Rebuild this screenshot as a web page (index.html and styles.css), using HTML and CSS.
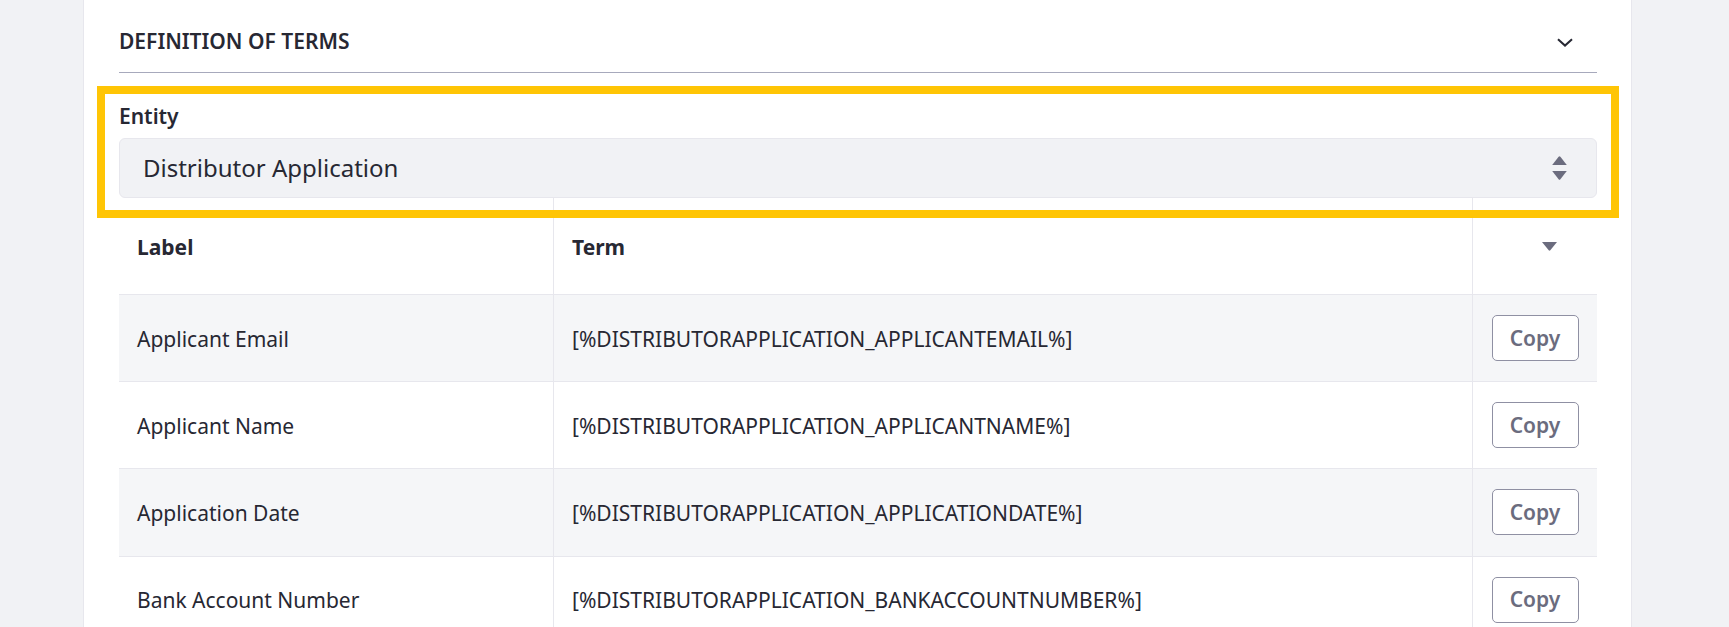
FILE: index.html
```html
<!DOCTYPE html>
<html lang="en">
<head>
<meta charset="utf-8">
<title>Definition of Terms</title>
<link rel="stylesheet" href="styles.css">
</head>
<body>
<div class="page">
  <section class="panel">
    <header class="panel-header">
      <h2 class="panel-title">DEFINITION OF TERMS</h2>
      <svg class="chevron" width="16" height="9" viewBox="0 0 16 9" aria-hidden="true"><path d="M1 1.2 L8 7.6 L15 1.2" fill="none" stroke="#272833" stroke-width="2"/></svg>
    </header>
    <div class="panel-body">
      <div class="form-group">
        <label class="field-label">Entity</label>
        <div class="select">
          <span class="select-value">Distributor Application</span>
          <svg class="select-arrows" width="15" height="24" viewBox="0 0 15 24" aria-hidden="true"><path d="M6.6 0.8 Q7.5 -0.2 8.4 0.8 L14.8 9 L0.2 9 Z" fill="#6b6c7e"/><path d="M0.2 15 L14.8 15 L8.4 23.2 Q7.5 24.2 6.6 23.2 Z" fill="#6b6c7e"/></svg>
        </div>
        <div class="highlight"></div>
      </div>
      <div class="terms">
        <div class="row head">
          <div class="cell">Label</div>
          <div class="cell">Term</div>
          <div class="cell action"><svg class="caret" width="15" height="9" viewBox="0 0 15 9" aria-hidden="true"><path d="M0 0 L15 0 L8.3 8.3 Q7.5 9.2 6.7 8.3 Z" fill="#6b6c7e"/></svg></div>
        </div>
        <div class="row striped">
          <div class="cell">Applicant Email</div>
          <div class="cell">[%DISTRIBUTORAPPLICATION_APPLICANTEMAIL%]</div>
          <div class="cell action"><button class="btn">Copy</button></div>
        </div>
        <div class="row">
          <div class="cell">Applicant Name</div>
          <div class="cell">[%DISTRIBUTORAPPLICATION_APPLICANTNAME%]</div>
          <div class="cell action"><button class="btn">Copy</button></div>
        </div>
        <div class="row striped">
          <div class="cell">Application Date</div>
          <div class="cell">[%DISTRIBUTORAPPLICATION_APPLICATIONDATE%]</div>
          <div class="cell action"><button class="btn">Copy</button></div>
        </div>
        <div class="row">
          <div class="cell">Bank Account Number</div>
          <div class="cell">[%DISTRIBUTORAPPLICATION_BANKACCOUNTNUMBER%]</div>
          <div class="cell action"><button class="btn">Copy</button></div>
        </div>
      </div>
    </div>
  </section>
</div>
</body>
</html>
```
FILE: styles.css
```css
html, body {
  margin: 0;
  padding: 0;
}
body {
  background: #f1f2f5;
  font-family: "Noto Sans", "Open Sans", sans-serif;
  color: #272833;
  height: 627px;
  overflow: hidden;
}
.page {
  display: flex;
  padding: 0 97px 0 83px;
}
.panel {
  flex: 1;
  background: #fff;
  border-left: 1px solid #e7e7ed;
  border-right: 1px solid #e7e7ed;
  padding: 0 34px 0 35px;
  min-height: 627px;
}
.panel-header {
  box-sizing: border-box;
  height: 73px;
  padding-top: 12px;
  display: flex;
  align-items: center;
  justify-content: space-between;
  border-bottom: 1px solid #a7a9bc;
}
.panel-title {
  margin: 0;
  font-size: 21px;
  font-weight: 600;
  line-height: 1.3;
}
.chevron {
  display: block;
  margin-right: 24px;
}
.form-group {
  position: relative;
  padding-top: 28px;
}
.field-label {
  display: block;
  font-size: 21px;
  font-weight: 600;
  line-height: 30px;
  margin-bottom: 7px;
}
.select {
  box-sizing: border-box;
  height: 60px;
  background: #f1f2f5;
  border: 1px solid #e7e7ed;
  border-radius: 6px;
  display: flex;
  align-items: center;
  justify-content: space-between;
  padding: 0 29px 0 23px;
}
.select-value {
  font-size: 24px;
  line-height: 1.5;
}
.select-arrows {
  display: block;
}
.highlight {
  position: absolute;
  top: 13px;
  left: -22px;
  right: -22px;
  bottom: -20px;
  border: 8px solid #ffc505;
  pointer-events: none;
  z-index: 2;
}
.terms {
  font-size: 21px;
}
.row {
  box-sizing: border-box;
  display: grid;
  grid-template-columns: 434px 919px 1fr;
  height: 87.2px;
  border-bottom: 1px solid #e7e7ed;
}
.row.head {
  height: 97px;
  font-weight: 700;
}
.row.striped {
  background: #f5f6f8;
}
.cell {
  display: flex;
  align-items: center;
  padding-left: 18px;
  padding-top: 1px;
  white-space: nowrap;
}
.cell + .cell {
  border-left: 1px solid #e7e7ed;
}
.cell.action {
  padding-left: 0;
  padding-top: 0;
  justify-content: center;
}
.head .cell.action {
  justify-content: flex-end;
  padding-right: 40px;
}
.caret {
  display: block;
}
.btn {
  box-sizing: border-box;
  width: 87px;
  height: 46px;
  background: #fff;
  border: 1px solid #8f90a3;
  border-radius: 5px;
  font-family: inherit;
  font-size: 21px;
  font-weight: 600;
  color: #6b6c7e;
  padding: 0;
  line-height: 1;
}
```
